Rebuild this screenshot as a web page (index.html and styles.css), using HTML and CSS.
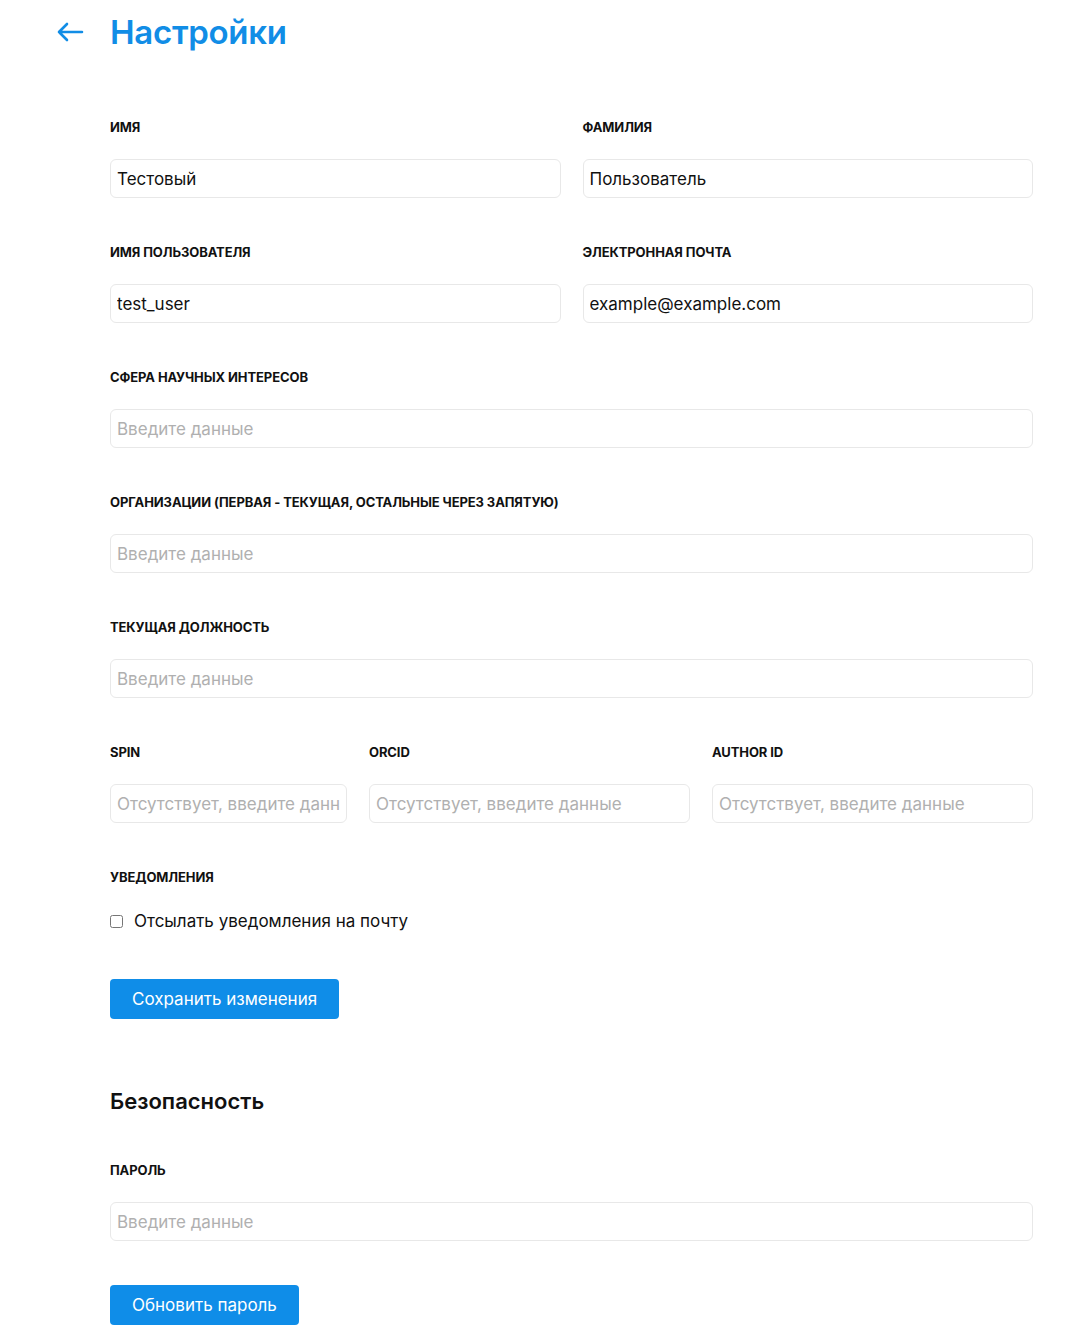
FILE: index.html
```html
<!DOCTYPE html>
<html>
	<head>
		<meta http-equiv="Content-Type" content="text/html; charset=utf-8" />
		<title>Настройки</title>
		<link rel="stylesheet" href="styles.css">
	</head>
	<body>
		<div class="header">
			<a href="#" class="back">
				<svg width="28" height="20" viewBox="0 0 28 20"><path d="M26 10H3M11 2L3 10l8 8" fill="none" stroke="#118de6" stroke-width="2.6" stroke-linecap="round" stroke-linejoin="round"/></svg>
			</a>
			<h1 class="title">Настройки</h1>
		</div>
		<form class="settings">
			<div class="row two">
				<div class="field">
					<label>Имя</label>
					<input type="text" value="Тестовый">
				</div>
				<div class="field">
					<label>Фамилия</label>
					<input type="text" value="Пользователь">
				</div>
			</div>
			<div class="row two">
				<div class="field">
					<label>Имя пользователя</label>
					<input type="text" value="test_user">
				</div>
				<div class="field">
					<label>Электронная почта</label>
					<input type="text" value="example@example.com">
				</div>
			</div>
			<div class="row">
				<div class="field">
					<label>Сфера научных интересов</label>
					<input type="text" placeholder="Введите данные">
				</div>
			</div>
			<div class="row">
				<div class="field">
					<label>Организации (первая - текущая, остальные через запятую)</label>
					<input type="text" placeholder="Введите данные">
				</div>
			</div>
			<div class="row">
				<div class="field">
					<label>Текущая должность</label>
					<input type="text" placeholder="Введите данные">
				</div>
			</div>
			<div class="row three">
				<div class="field">
					<label>SPIN</label>
					<input type="text" placeholder="Отсутствует, введите данные">
				</div>
				<div class="field">
					<label>ORCID</label>
					<input type="text" placeholder="Отсутствует, введите данные">
				</div>
				<div class="field">
					<label>Author ID</label>
					<input type="text" placeholder="Отсутствует, введите данные">
				</div>
			</div>
			<div class="field">
				<label>Уведомления</label>
				<div class="check">
					<input type="checkbox" id="notify">
					<span>Отсылать уведомления на почту</span>
				</div>
			</div>
			<button type="button" class="btn">Сохранить изменения</button>

			<h2 class="section">Безопасность</h2>
			<div class="row">
				<div class="field">
					<label>Пароль</label>
					<input type="password" placeholder="Введите данные">
				</div>
			</div>
			<button type="button" class="btn last">Обновить пароль</button>
		</form>
	</body>
</html>
```

FILE: styles.css
```css
body {margin:0; background:#fff; font-family:Inter, "Noto Sans", sans-serif; color:#111;}
.header {display:flex; align-items:center; padding:10px 0 0 56px; height:44px;}
.back {display:flex; width:28px; margin-right:26px;}
.title {margin:0; font-size:33px; line-height:44px; font-weight:600; color:#118de6; letter-spacing:-0.3px;}
.settings {margin:63px 32px 0 110px;}
.row {margin-bottom:44px;}
.row.two {display:grid; grid-template-columns:1fr 1fr; column-gap:22px;}
.row.three {display:grid; grid-template-columns:237px 1fr 1fr; column-gap:22px;}
.field label {display:block; font-size:13px; line-height:20px; font-weight:700; text-transform:uppercase; margin-bottom:22px; letter-spacing:-0.1px;}
.field input[type=text], .field input[type=password] {display:block; box-sizing:border-box; width:100%; height:39px; padding:0 6px; border:1px solid #e8e8e8; border-radius:6px; font:17px Inter, "Noto Sans", sans-serif; color:#111; outline:none;}
.field input::placeholder {color:#b0b0b0;}
.check {display:flex; align-items:center; height:24px; font-size:17px;}
.check input {margin:0 11px 0 0; width:13px; height:13px;}
.btn {display:block; margin-top:46px; height:40px; padding:0 22px; border:0; border-radius:4px; background:#0f8de8; color:#fff; font:17px Inter, "Noto Sans", sans-serif;}
.btn.last {margin-top:0;}
.section {margin:66px 0 43px; font-size:22px; line-height:32px; font-weight:600;}
```
